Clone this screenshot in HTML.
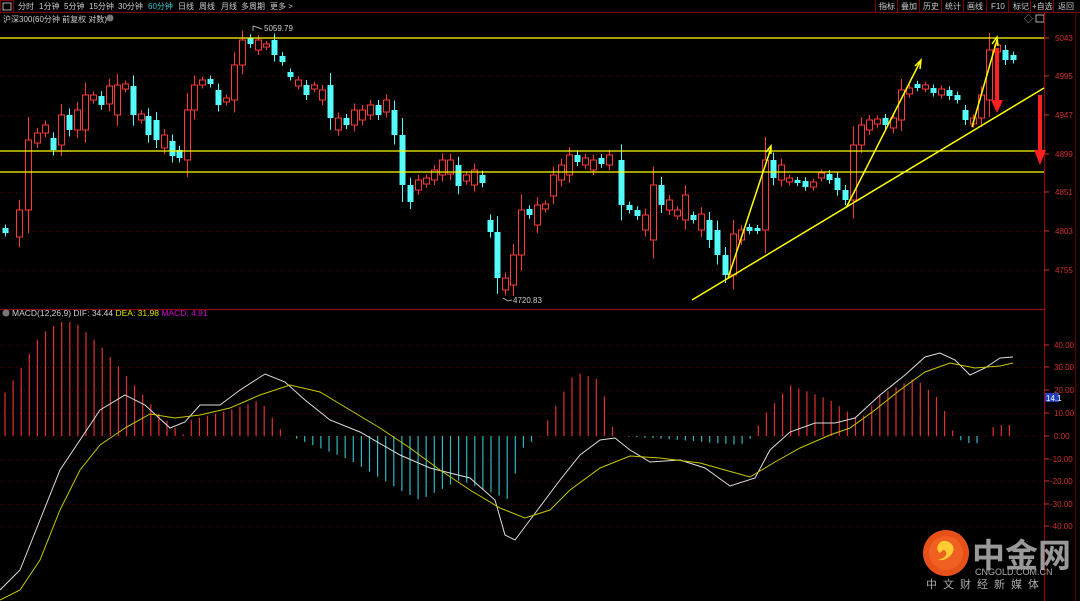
<!DOCTYPE html>
<html><head><meta charset="utf-8">
<style>
html,body{margin:0;padding:0;background:#000;width:1080px;height:601px;overflow:hidden;font-family:"Liberation Sans","Noto Sans CJK SC",sans-serif}
svg{position:absolute;left:0;top:0}
</style></head><body>
<svg id="s" width="1080" height="601" xmlns="http://www.w3.org/2000/svg" font-family="Liberation Sans, Noto Sans CJK SC, sans-serif">
<rect width="1080" height="601" fill="#000"/>
<rect x="0.5" y="0.5" width="13" height="12" fill="none" stroke="#800000"/>
<rect x="3" y="3" width="8" height="7" fill="none" stroke="#aaa"/>
<line x1="0" y1="12.5" x2="1080" y2="12.5" stroke="#800000"/>
<g font-size="8" fill="#ccc">
<text x="18" y="9">分时</text><text x="39" y="9">1分钟</text><text x="64" y="9">5分钟</text><text x="89" y="9">15分钟</text><text x="118" y="9">30分钟</text>
<text x="148" y="9" fill="#39c8d0">60分钟</text><text x="178" y="9">日线</text><text x="199" y="9">周线</text><text x="221" y="9">月线</text><text x="241" y="9">多周期</text><text x="270" y="9">更多 &gt;</text>
<text x="879" y="9">指标</text><text x="901" y="9">叠加</text><text x="923" y="9">历史</text><text x="945" y="9">统计</text><text x="967" y="9">画线</text><text x="991" y="9">F10</text><text x="1013" y="9">标记</text><text x="1032" y="9">+自选</text><text x="1058" y="9">返回</text>
<text x="3" y="22">沪深300(60分钟 前复权 对数)</text>
</g>
<g stroke="#800000"><line x1="875.5" y1="0" x2="875.5" y2="12"/><line x1="897.5" y1="0" x2="897.5" y2="12"/><line x1="919.5" y1="0" x2="919.5" y2="12"/><line x1="941.5" y1="0" x2="941.5" y2="12"/><line x1="963.5" y1="0" x2="963.5" y2="12"/><line x1="986.5" y1="0" x2="986.5" y2="12"/><line x1="1008.5" y1="0" x2="1008.5" y2="12"/><line x1="1030.5" y1="0" x2="1030.5" y2="12"/><line x1="1053.5" y1="0" x2="1053.5" y2="12"/></g>
<circle cx="110" cy="18" r="3.5" fill="#777"/>
<rect x="1036" y="15" width="8" height="7" fill="none" stroke="#aaa"/>
<text x="1024" y="22" font-size="9" fill="#aaa">◇</text>
<line x1="1044.5" y1="13" x2="1044.5" y2="601" stroke="#a00000"/>
<line x1="1075.5" y1="13" x2="1075.5" y2="601" stroke="#600000"/>
<line x1="0" y1="309.5" x2="1044" y2="309.5" stroke="#a00000"/>
<g id="grid" stroke="#500000" stroke-dasharray="1,3"></g>
<g font-size="8" fill="#d03030" id="ax"></g>
<g id="c"></g>
<g stroke="#ffff00" stroke-width="1.3"><line x1="0" y1="38" x2="1044" y2="38"/><line x1="0" y1="151" x2="1044" y2="151"/><line x1="0" y1="172" x2="1044" y2="172"/></g>
<g stroke="#ffff00" stroke-width="1.5" fill="none">
<line x1="692" y1="300" x2="1044" y2="88"/>
<polyline points="728,278 771,148"/><polyline points="846,208 920,62"/><polyline points="972,127 997,40"/>
<path d="M766,152 L771,146 L771,154" /><path d="M915,66 L921,60 L920,69"/><path d="M992,44 L997,37 L998,46"/>
</g>
<g fill="#ff2020"><rect x="995" y="48" width="4" height="55"/><path d="M991,100 L1003,100 L997,113Z"/><rect x="1038" y="95" width="4" height="58"/><path d="M1034,150 L1046,150 L1040,165Z"/></g>
<g font-size="8" fill="#ccc"><text x="264" y="31">5059.79</text><text x="513" y="303">4720.83</text></g>
<path d="M253,31 L253,26 L262,29" stroke="#ccc" fill="none" stroke-width=".8"/>
<path d="M503,298 L508,301 L512,300" stroke="#ccc" fill="none" stroke-width=".8"/>
<circle cx="6" cy="313" r="3.5" fill="#777"/>
<text y="316" font-size="8.5"><tspan x="12" fill="#ccc">MACD(12,26,9) DIF: 34.44 </tspan><tspan fill="#e0e000">DEA: 31.98 </tspan><tspan fill="#d000d0">MACD: 4.91</tspan></text>
<g id="m"></g>
<polyline id="dif" fill="none" stroke="#ddd" stroke-width="1"/>
<polyline id="dea" fill="none" stroke="#c8c800" stroke-width="1"/>
<rect x="1045" y="393" width="14" height="9" fill="#2040c0"/><text x="1046" y="401" font-size="8" fill="#fff">14.1</text>
<circle cx="946" cy="553" r="23" fill="#e8501a"/>
<circle cx="946" cy="553" r="17" fill="#f06020"/>
<path d="M937,548 q3,-10 12,-6 q8,5 2,13 q-5,6 -13,5 q10,-3 8,-8 q-2,-4 -5,0 q-2,3 -4,-4z" fill="#ffcc33"/>
<text x="972" y="567" font-size="33" font-weight="bold" fill="#999" font-family="Noto Sans CJK SC, sans-serif">中金网</text>
<text x="975" y="575" font-size="9" fill="#aaa">CNGOLD.COM.CN</text>
<text x="926" y="588" font-size="11" fill="#aaa" letter-spacing="6">中文财经新媒体</text>
</svg>
<script>
const NS="http://www.w3.org/2000/svg";
function el(p,t,a){const e=document.createElementNS(NS,t);for(const k in a)e.setAttribute(k,a[k]);p.appendChild(e);return e;}
const grid=document.getElementById('grid'),ax=document.getElementById('ax');
[[38,'5043'],[76,'4995'],[115,'4947'],[154,'4899'],[192,'4851'],[231,'4803'],[270,'4755']].forEach(([y,t])=>{el(grid,'line',{x1:0,y1:y+.5,x2:1044,y2:y+.5});el(ax,'line',{x1:1044,y1:y,x2:1049,y2:y,stroke:'#d03030'});const e=el(ax,'text',{x:1055,y:y+3});e.textContent=t;});
[[345,'40.00'],[367,'30.00'],[390,'20.00'],[413,'10.00'],[436,'0.00'],[459,'-10.00'],[481,'-20.00'],[504,'-30.00'],[526,'-40.00']].forEach(([y,t])=>{el(grid,'line',{x1:0,y1:y+.5,x2:1044,y2:y+.5});el(ax,'line',{x1:1044,y1:y,x2:1049,y2:y,stroke:'#d03030'});const e=el(ax,'text',{x:t[0]=='-'?1050:1054,y:y+3});e.textContent=t;});
const C=[[5,228,233,0],[19,210,237,1],[28,140,210,1],[37,133,143,1],[45,125,133,1],[53,138,150,0],[61,115,145,1],[69,115,130,0],[77,110,130,1],[85,95,130,1],[93,95,100,1],[101,96,105,0],[109,86,104,1],[117,85,115,1],[125,84,89,1],[133,86,115,0],[141,114,120,1],[148,116,135,0],[156,120,140,0],[164,135,148,1],[172,141,156,0],[179,150,158,0],[187,110,160,1],[194,85,110,1],[202,80,85,1],[210,79,84,0],[218,90,105,0],[226,98,102,1],[234,65,100,1],[242,40,65,1],[250,38,44,0],[258,40,50,1],[266,44,47,1],[274,40,55,0],[282,56,62,0],[290,72,77,0],[298,80,86,1],[306,85,95,0],[314,85,89,1],[322,90,100,1],[330,85,118,0],[338,118,130,1],[346,118,125,0],[354,110,125,1],[362,110,120,1],[370,105,115,1],[378,105,115,0],[386,100,112,1],[394,110,135,0],[402,135,185,0],[410,185,202,0],[418,180,190,1],[426,178,184,1],[434,170,180,1],[442,160,175,1],[450,160,174,1],[458,165,186,0],[466,175,181,1],[474,170,185,1],[482,175,183,0],[490,220,232,0],[497,232,278,0],[505,278,290,1],[513,255,285,1],[521,210,255,1],[529,209,215,0],[537,205,225,1],[545,204,209,1],[553,175,196,1],[561,165,180,1],[569,155,175,1],[577,155,162,0],[585,158,165,1],[593,160,170,1],[601,158,164,0],[609,155,165,1],[621,160,205,0],[629,205,210,0],[637,210,216,0],[645,215,230,1],[653,185,240,1],[661,185,205,0],[669,200,210,1],[677,210,216,1],[685,195,220,1],[693,215,220,0],[701,214,230,1],[709,220,240,0],[717,230,255,0],[725,255,275,0],[733,234,275,1],[741,230,240,1],[749,227,231,0],[757,228,231,0],[765,160,230,1],[773,160,178,0],[781,165,180,1],[789,178,182,1],[797,180,183,0],[805,181,187,0],[813,182,187,1],[821,173,178,1],[829,174,180,0],[837,178,190,0],[845,190,200,0],[853,145,200,1],[861,125,145,1],[869,120,130,1],[877,119,124,1],[885,118,125,0],[893,118,128,1],[901,90,120,1],[909,88,94,1],[917,84,88,0],[925,85,89,1],[933,88,93,0],[941,89,95,1],[949,90,96,0],[957,95,100,0],[965,110,120,0],[973,118,124,1],[981,95,118,1],[989,50,100,1],[997,45,52,1],[1005,50,60,0],[1013,55,60,0]];
const g=document.getElementById('c');
C.forEach(([x,t,b,u])=>{const col=u?'#ff3838':'#54fcfc';const w1=t-Math.max(3,(b-t)*0.3+2),w2=b+Math.max(3,(b-t)*0.3+2);
el(g,'line',{x1:x+.5,y1:w1,x2:x+.5,y2:w2,stroke:col});
if(u){el(g,'rect',{x:x-2.5,y:t,width:6,height:Math.max(1,b-t),fill:'#000',stroke:col});}
else el(g,'rect',{x:x-2.5,y:t,width:6,height:Math.max(1,b-t),fill:col});});
function hv(x){const k=[[0,400],[20,370],[40,335],[60,322],[75,322],[100,345],[130,380],[160,415],[185,436],[190,420],[230,410],[260,400],[285,436],[290,436],[350,460],[400,490],[420,500],[460,480],[510,500],[520,450],[540,436],[545,425],[575,372],[600,380],[615,436],[620,436],[680,440],[740,445],[755,436],[760,420],[790,385],[830,400],[860,420],[880,395],[915,378],[940,400],[955,436],[960,440],[975,445],[985,436],[995,425],[1013,425]];for(let i=1;i<k.length;i++)if(x<=k[i][0]){const a=k[i-1],b=k[i];return a[1]+(b[1]-a[1])*(x-a[0])/(b[0]-a[0]);}return 436;}
const m=document.getElementById('m');
for(let x=5;x<=1013;x+=8.1){const y=hv(x);el(m,'line',{x1:x.toFixed(1),y1:436,x2:x.toFixed(1),y2:y.toFixed(1),stroke:y<436?'#e03030':'#30b8c0','stroke-width':1.2});}
document.getElementById('dif').setAttribute('points',"0,590 20,570 40,520 60,470 80,440 100,410 125,395 145,405 170,428 185,422 200,405 220,405 240,390 265,374 285,382 305,400 330,420 360,432 400,455 430,468 470,478 495,500 505,535 515,540 530,520 560,480 580,455 600,440 615,438 630,450 650,462 680,460 705,468 730,486 755,478 770,450 790,432 815,423 835,423 855,418 880,395 905,375 925,357 940,353 955,360 970,375 985,368 1000,358 1013,357");
document.getElementById('dea').setAttribute('points',"0,600 20,590 40,560 60,510 80,470 100,445 125,428 150,414 175,418 200,415 230,408 260,395 290,385 320,392 350,410 380,428 410,448 440,470 470,490 500,508 525,518 550,510 570,490 600,468 630,456 660,458 700,463 725,470 750,477 775,462 800,448 830,435 850,428 875,410 900,390 925,372 950,363 975,368 1000,366 1013,363");
</script>
</body></html>
